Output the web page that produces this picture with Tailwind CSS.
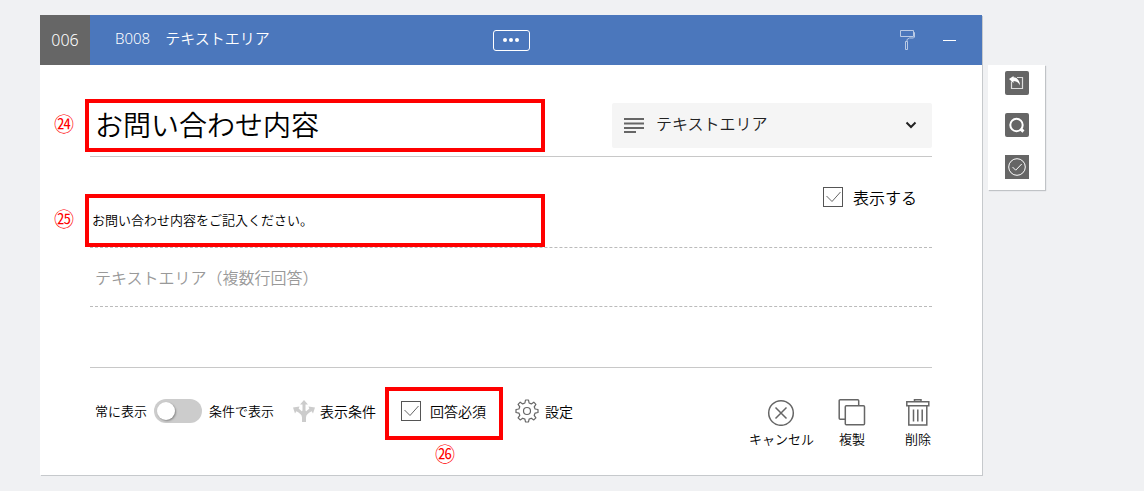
<!DOCTYPE html>
<html lang="ja">
<head>
  <meta charset="UTF-8" />
  <meta name="viewport" content="width=device-width, initial-scale=1.0"/>
  <title>B008 テキストエリア</title>
  <script src="https://cdn.jsdelivr.net/npm/@tailwindcss/browser@4"></script>
</head>
<body class="min-h-screen bg-[#f0f1f3] font-['Noto_Sans_CJK_JP',sans-serif] font-[350] text-black">

  <main class="flex items-start gap-[6px] pt-[15px] pr-[99px] pb-4 pl-10">

    <section class="min-w-0 flex-1 bg-white shadow-[1px_1px_0_#c6c9cc]">

      <header class="grid h-[50px] grid-cols-[1fr_auto_1fr] items-center bg-[#4b77bc] font-['Noto_Sans','Noto_Sans_CJK_JP',sans-serif] text-white">
        <div class="flex h-full items-center">
          <span class="flex h-full w-[50px] items-center justify-center bg-[#666] text-base">006</span>
          <h1 class="pb-[3px] pl-[25px] text-[15px] font-[350] whitespace-pre">B008　テキストエリア</h1>
        </div>
        <button type="button" aria-label="メニュー" class="flex h-[21px] w-[37px] items-center justify-center gap-[2px] rounded-[3px] border border-white">
          <span class="size-1 rounded-full bg-white"></span>
          <span class="size-1 rounded-full bg-white"></span>
          <span class="size-1 rounded-full bg-white"></span>
        </button>
        <div class="flex items-center justify-end gap-[27px] pr-[26px]">
          <button type="button" aria-label="デザイン">
            <svg class="block h-5 w-4" viewBox="0 0 16 20" fill="none" stroke="#b9cae5">
              <path d="M.5.5h13v6H.5zM13.500 2.500h1v4.500l-1 1H9.500L7 9.500v2M5.500 11.500h2v8h-2z"/>
            </svg>
          </button>
          <button type="button" aria-label="最小化" class="flex h-5 w-[13px] items-center">
            <span class="h-px w-full bg-white"></span>
          </button>
        </div>
      </header>

      <form class="px-[50px]">

        <div class="relative mt-[38px] flex h-[54px] items-start justify-between border-b border-[#c8c8c8]">
          <input type="text" aria-label="質問タイトル" value="お問い合わせ内容" class="h-[45px] w-[450px] min-w-0 bg-transparent pb-1 pl-[5px] text-[28px] outline-none"/>
          <div class="relative w-80">
            <select aria-label="質問タイプ" class="h-[45px] w-full appearance-none rounded-[2px] bg-[#f5f5f5] pb-[5px] pl-11 text-base text-[#222] outline-none">
              <option>テキストエリア</option>
            </select>
            <svg class="pointer-events-none absolute top-[15px] left-3 h-4 w-5" viewBox="0 0 20 16" fill="#666">
              <path d="M0 0h20v2H0zM0 4.500h20v2H0zM0 9h20v2H0zM0 13h12v2H0z"/>
            </svg>
            <svg class="pointer-events-none absolute top-[18px] right-[15px] h-2 w-3" viewBox="0 0 12 8" fill="none" stroke="#222" stroke-width="2">
              <path d="M1.500 1.500 6 6l4.500-4.500"/>
            </svg>
          </div>
          <div class="pointer-events-none absolute -top-1 -left-[5px] h-[53px] w-[460px] border-4 border-[#f00]"></div>
          <span class="absolute top-[9px] -left-9 text-xl leading-6 text-[#f00]">㉔</span>
        </div>

        <div class="relative flex h-[91px] items-start justify-between border-b border-dashed border-[#bbb]">
          <input type="text" aria-label="説明文" value="お問い合わせ内容をご記入ください。" class="mt-[47px] h-8 w-[450px] min-w-0 bg-transparent pb-[2px] pl-[2px] text-[13px] outline-none"/>
          <label class="mt-7 mr-[15px] flex items-center gap-[10px] text-base">
            <span class="relative flex">
              <input type="checkbox" checked class="size-5 appearance-none border border-[#555]"/>
              <svg class="pointer-events-none absolute inset-0 size-5" viewBox="0 0 20 20" fill="none" stroke="#666"><path d="M3.500 9l5.500 5.500L17.500 5"/></svg>
            </span>
            表示する
          </label>
          <div class="pointer-events-none absolute top-[37px] -left-[5px] h-[53px] w-[460px] border-4 border-[#f00]"></div>
          <span class="absolute top-[50px] -left-9 text-xl leading-6 text-[#f00]">㉕</span>
        </div>

        <textarea aria-label="回答" placeholder="テキストエリア（複数行回答）" class="block h-[59px] w-full resize-none border-b border-dashed border-[#bbb] pt-[17px] pl-[5px] text-base placeholder:text-[#999] outline-none"></textarea>

        <div class="mt-[60px] flex items-start justify-between border-t border-[#c8c8c8] pt-[30px] pb-[26px]">

          <div class="flex h-[26px] items-center pl-[5px] text-sm whitespace-nowrap">
            <label class="flex items-center gap-[7px] text-[13px]">
              常に表示
              <span class="relative flex">
                <input type="checkbox" class="peer h-6 w-12 appearance-none rounded-full bg-[#ccc]"/>
                <span class="pointer-events-none absolute top-[3px] left-[3px] size-[18px] rounded-full bg-white shadow-[1px_1px_2px_#888] peer-checked:left-[27px]"></span>
              </span>
              条件で表示
            </label>
            <button type="button" class="ml-[19px] flex items-center gap-[5px]">
              <svg class="h-[22px] w-[22px]" viewBox="0 0 22 22" fill="#ccc">
                <path d="M11 0l4 4.500h-2.500V10c0 1 .4 1.500 1 1 1-.9 1.700-1.700 2.800-2.200L15.500 6.500 22 7.500l-2 6-1.400-2.300c-3 1.400-5.600 3.600-5.600 6.300V22H9v-4.500c0-2.700-2.600-4.900-5.600-6.300L2 13.500l-2-6 6.500-1-.8 2.300C6.800 9.300 7.500 10.100 8.500 11c.6.500 1 0 1-1V4.500H7z"/>
              </svg>
              表示条件
            </button>
            <div class="relative ml-[25px]">
              <label class="flex items-center gap-[9px]">
                <span class="relative flex">
                  <input type="checkbox" checked class="size-5 appearance-none border border-[#555]"/>
                  <svg class="pointer-events-none absolute inset-0 size-5" viewBox="0 0 20 20" fill="none" stroke="#666"><path d="M3.500 9l5.500 5.500L17.500 5"/></svg>
                </span>
                回答必須
              </label>
              <div class="pointer-events-none absolute -top-[14px] -left-4 h-[53px] w-[118px] border-4 border-[#f00]"></div>
              <span class="absolute top-[41px] left-[34px] text-xl leading-6 text-[#f00]">㉖</span>
            </div>
            <button type="button" class="ml-[29px] flex items-center gap-[6px]">
              <svg class="size-6" viewBox="0 0 24 24" fill="none" stroke="#666" stroke-width="1.200" stroke-linejoin="round">
                <path d="M10.500 1h3l.6 3 2.200.9 2.500-1.700 2.100 2.100-1.700 2.500.9 2.200 2.900.5v3l-2.900.6-.9 2.200 1.700 2.500-2.100 2.100-2.500-1.700-2.200.9-.6 2.900h-3l-.6-2.900-2.200-.9-2.500 1.700-2.100-2.100 1.700-2.500-.9-2.200L1 13.500v-3l2.900-.5.9-2.200-1.700-2.500 2.100-2.100 2.500 1.700 2.200-.9z"/>
                <circle cx="12" cy="12" r="3.500"/>
              </svg>
              設定
            </button>
          </div>

          <div class="flex gap-6 text-[13px] leading-5">
            <button type="button" class="flex flex-col items-center gap-[3px]">
              <svg class="size-7" viewBox="0 0 28 28" fill="none" stroke="#666" stroke-width="1.500">
                <circle cx="14" cy="15" r="12.300"/>
                <path d="M8.500 9.500l11 11M19.500 9.500l-11 11"/>
              </svg>
              キャンセル
            </button>
            <button type="button" class="flex flex-col items-center gap-[3px]">
              <svg class="size-7" viewBox="0 0 28 28" fill="none" stroke="#666" stroke-width="1.500" stroke-linejoin="round">
                <path d="M7 21.200H2.200a1 1 0 0 1-1-1V2.800a1 1 0 0 1 1-1h17.500a1 1 0 0 1 1 1V7.500"/>
                <rect x="7.300" y="7.800" width="19.200" height="19" rx="1"/>
              </svg>
              複製
            </button>
            <button type="button" class="ml-[14px] flex flex-col items-center gap-[3px]">
              <svg class="size-7" viewBox="0 0 28 28" fill="none" stroke="#666" stroke-width="1.500">
                <path d="M2.800 3.800h22v4h-22zM10.500 3.500V1.700h6.500v1.800M4.800 8v19h18V8M9.500 11.500v12M13.800 11.500v12M18.200 11.500v12"/>
              </svg>
              削除
            </button>
          </div>
        </div>
      </form>
    </section>

    <aside class="mt-[50px] flex w-[57px] flex-col items-center gap-[18px] bg-white pt-[6px] pb-[11px] shadow-[1px_1px_1px_#c0c3c6]">
      <button type="button" aria-label="元に戻す" class="rounded-[2px] bg-[#666]">
        <svg class="block size-6" viewBox="0 0 24 24" fill="none" stroke="#ddd">
          <path d="M12 6.500h5.500v11h-11V10.500" stroke-width="1.200"/>
          <path d="M4 8l4.500-3v1.300c4 .2 6.500 3.500 6.500 8.200-1.500-3-3.500-4.200-6.500-4.500v2z" fill="#fff" stroke="none"/>
        </svg>
      </button>
      <button type="button" aria-label="プレビュー" class="rounded-[2px] bg-[#666]">
        <svg class="block size-6" viewBox="0 0 24 24" fill="none" stroke="#fff" stroke-width="2">
          <circle cx="11.500" cy="12" r="6.200"/>
          <path d="M15.500 16l3 2.500" stroke-width="3"/>
        </svg>
      </button>
      <button type="button" aria-label="完了" class="bg-[#666]">
        <svg class="block size-6" viewBox="0 0 24 24" fill="none" stroke="#fff">
          <circle cx="12" cy="12" r="8.300"/>
          <path d="M7.500 12l3.200 3.200 6-6.200"/>
        </svg>
      </button>
    </aside>

  </main>

</body>
</html>
